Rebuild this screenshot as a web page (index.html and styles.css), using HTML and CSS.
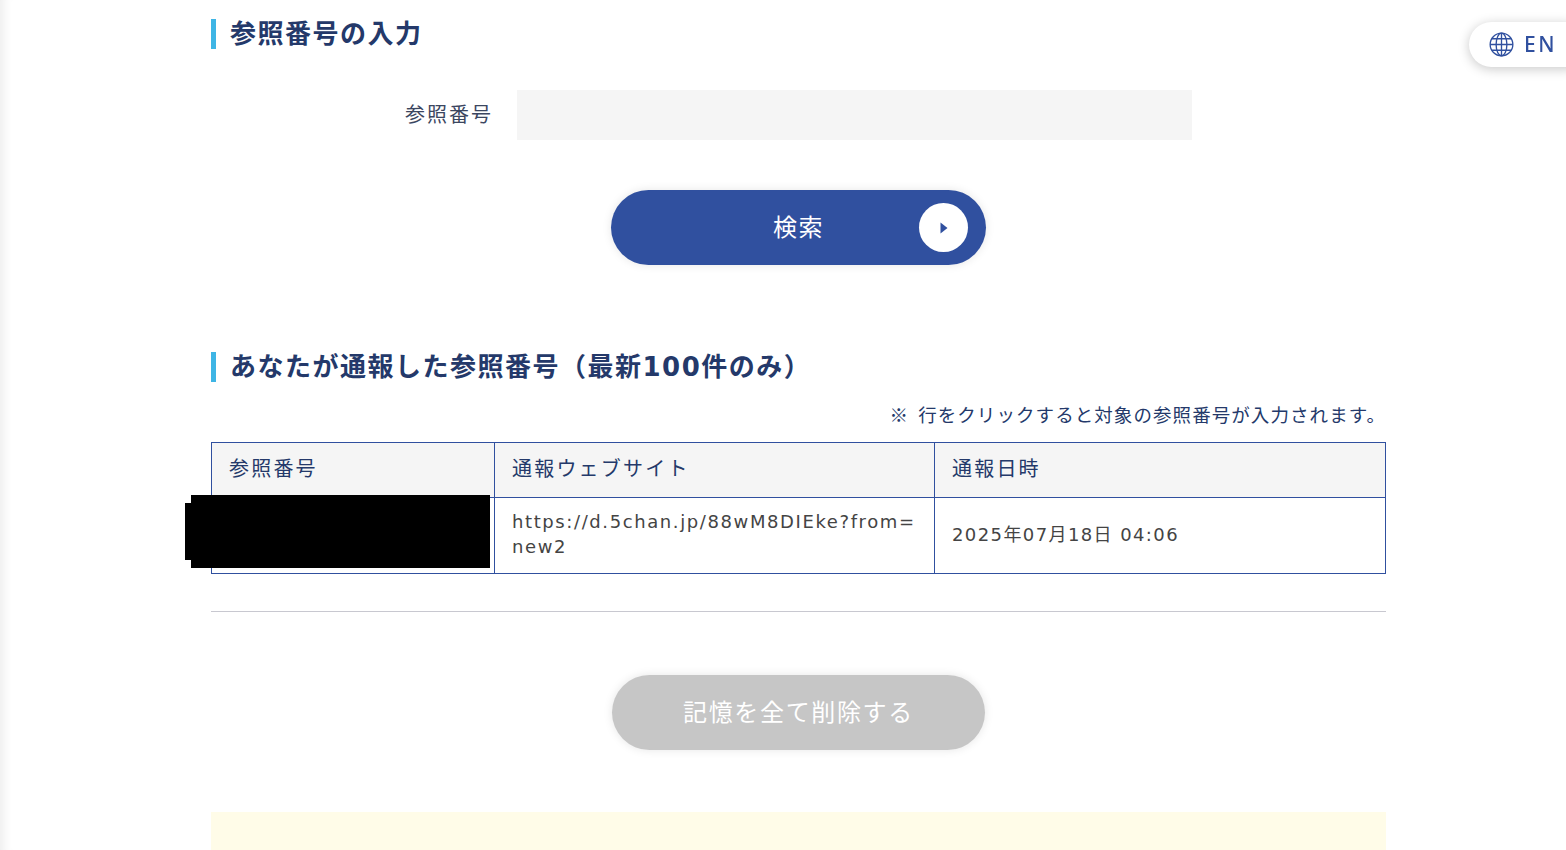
FILE: index.html
```html
<!DOCTYPE html>
<html lang="ja">
<head>
<meta charset="utf-8">
<title>参照番号の入力</title>
<link rel="stylesheet" href="styles.css">
</head>
<body>
<div class="lang">
  <svg class="globe" viewBox="0 0 26 26" width="25" height="25" fill="none" stroke="#30509f" stroke-width="1.4">
    <circle cx="13" cy="13" r="11.8"/>
    <ellipse cx="13" cy="13" rx="5.6" ry="11.8"/>
    <path d="M13 1.2v23.6M1.2 13h23.6M3 7h20M3 19h20"/>
  </svg>
  <span class="lang-text">EN</span>
</div>
<main class="content">
  <h2 class="heading first">参照番号の入力</h2>
  <div class="field">
    <label class="field-label" for="ref">参照番号</label>
    <input class="field-input" id="ref" type="text">
  </div>
  <div class="actions search-actions">
    <button class="btn btn-primary" type="button">
      <span>検索</span>
      <span class="btn-icon"><svg viewBox="0 0 8 12" width="8" height="12"><path d="M0.5 0.5 7.5 6 0.5 11.5z" fill="#30509f"/></svg></span>
    </button>
  </div>
  <h2 class="heading second">あなたが通報した参照番号（最新100件のみ）</h2>
  <p class="note"><span class="note-mark">※</span>行をクリックすると対象の参照番号が入力されます。</p>
  <div class="table-wrap">
    <table class="history">
      <colgroup><col class="c1"><col class="c2"><col class="c3"></colgroup>
      <thead>
        <tr><th>参照番号</th><th>通報ウェブサイト</th><th>通報日時</th></tr>
      </thead>
      <tbody>
        <tr><td></td><td class="url">https://d.5chan.jp/88wM8DIEke?from=new2</td><td class="date">2025年07月18日 04:06</td></tr>
      </tbody>
    </table>
    <div class="redact redact-a"></div>
    <div class="redact redact-b"></div>
  </div>
  <hr class="rule">
  <div class="actions clear-actions">
    <button class="btn btn-disabled" type="button">記憶を全て削除する</button>
  </div>
  <div class="notice"></div>
</main>
</body>
</html>
```
FILE: styles.css
```css
html, body {
  margin: 0;
  padding: 0;
  height: 850px;
  overflow: hidden;
  background: #fff;
}
body {
  font-family: "Noto Sans CJK JP", "Noto Sans", sans-serif;
  color: #333;
  box-shadow: inset 12px 0 10px -8px rgba(0, 0, 0, 0.07);
}
.content {
  width: 1175px;
  margin-left: 211px;
  padding-top: 19px;
}
.heading {
  margin: 0;
  border-left: 5px solid #3eb5e5;
  padding-left: 14px;
  height: 30px;
  line-height: 30px;
  font-family: "DejaVu Sans", "Noto Sans CJK JP", sans-serif;
  font-size: 26px;
  font-weight: 700;
  letter-spacing: 1.5px;
  color: #24396a;
  white-space: nowrap;
}
.field {
  display: flex;
  align-items: center;
  margin-top: 41px;
}
.field-label {
  width: 282px;
  padding-bottom: 4px;
  text-align: right;
  font-size: 20px;
  letter-spacing: 2px;
  color: #3b4660;
}
.field-input {
  width: 675px;
  height: 50px;
  margin-left: 24px;
  box-sizing: border-box;
  border: 0;
  padding: 0;
  background: #f5f5f5;
}
.actions {
  display: flex;
  justify-content: center;
}
.search-actions {
  margin-top: 50px;
}
.btn {
  position: relative;
  width: 375px;
  height: 75px;
  border: 0;
  border-radius: 38px;
  padding: 0 0 4px;
  font-family: inherit;
  font-size: 24px;
  letter-spacing: 1.5px;
  box-shadow: 0 0 10px rgba(0, 0, 0, 0.1);
}
.btn-primary {
  background: #30509f;
  color: #fff;
}
.btn-icon {
  position: absolute;
  right: 18px;
  top: 13px;
  display: flex;
  align-items: center;
  justify-content: center;
  width: 49px;
  height: 49px;
  border-radius: 50%;
  background: #fff;
}
.second {
  margin-top: 87px;
}
.note {
  margin: 19px 0 0;
  height: 27px;
  line-height: 27px;
  text-align: right;
  font-size: 18.5px;
  letter-spacing: 1.07px;
  color: #24396a;
}
.note-mark {
  margin-right: 9px;
}
.table-wrap {
  position: relative;
  margin-top: 14px;
}
.history {
  width: 100%;
  table-layout: fixed;
  border-collapse: collapse;
  font-size: 20px;
  letter-spacing: 2.2px;
  color: #444;
}
.c1 { width: 283px; }
.c2 { width: 440px; }
.history th, .history td {
  border: 1px solid #30509f;
  padding: 0 17px;
  text-align: left;
  font-weight: 400;
  word-break: break-all;
}
.history th {
  height: 49px;
  padding-bottom: 5px;
  background: #f5f5f5;
  color: #24396a;
}
.history td {
  height: 75px;
  line-height: 25px;
}
.history .url {
  font-family: "DejaVu Sans", sans-serif;
  font-size: 18px;
  letter-spacing: 1.6px;
  height: 72px;
  padding-bottom: 3px;
}
.history .date {
  font-family: "DejaVu Sans", "Noto Sans CJK JP", sans-serif;
  font-size: 18px;
  letter-spacing: 1.4px;
  height: 73px;
  padding-bottom: 2px;
}
.redact {
  position: absolute;
  background: #000;
}
.redact-a {
  left: -20px;
  top: 53px;
  width: 299px;
  height: 73px;
}
.redact-b {
  left: -26px;
  top: 61px;
  width: 10px;
  height: 57px;
}
.rule {
  margin: 37px 0 0;
  border: 0;
  border-top: 1px solid #c8c8d0;
}
.clear-actions {
  margin-top: 63px;
}
.btn-disabled {
  width: 373px;
  background: #c6c6c6;
  color: #fff;
  letter-spacing: 1.65px;
}
.notice {
  margin-top: 62px;
  height: 60px;
  background: #fffce8;
}
.lang {
  position: fixed;
  top: 22px;
  right: -22px;
  display: flex;
  align-items: center;
  gap: 10px;
  width: 99px;
  height: 45px;
  padding-left: 20px;
  border-radius: 23px;
  background: #fff;
  box-shadow: 0 2px 12px rgba(0, 0, 0, 0.22);
  box-sizing: content-box;
}
.globe {
  flex: none;
}
.lang-text {
  font-family: "Noto Sans", sans-serif;
  font-size: 21px;
  font-weight: 500;
  line-height: 25px;
  letter-spacing: 2.5px;
  color: #30509f;
}
```
